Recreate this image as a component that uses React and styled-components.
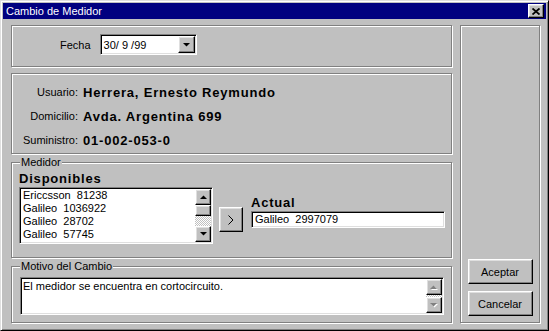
import React from 'react';
import styled, { createGlobalStyle } from 'styled-components';

const GlobalStyle = createGlobalStyle`
  html, body {
    margin: 0;
    padding: 0;
    background: #c0c0c0;
  }
  body {
    font-family: 'Liberation Sans', Arial, sans-serif;
    font-size: 11px;
    color: #000;
  }
  * {
    box-sizing: border-box;
  }
`;

const raised = `
  border: 1px solid;
  border-color: #fff #000 #000 #fff;
  box-shadow: inset -1px -1px #808080, inset 1px 1px #dfdfdf;
  background: #c0c0c0;
`;

const sunken = `
  border: 1px solid;
  border-color: #808080 #fff #fff #808080;
  box-shadow: inset 1px 1px #000, inset -1px -1px #dfdfdf;
  background: #fff;
`;

const Window = styled.div`
  width: 549px;
  height: 331px;
  border: 1px solid;
  border-color: #dfdfdf #000 #000 #dfdfdf;
  box-shadow: inset 1px 1px #fff, inset -1px -1px #808080;
  padding: 2px;
  background: #c0c0c0;
  display: flex;
  flex-direction: column;
`;

const TitleBar = styled.div`
  height: 16px;
  background: #000080;
  color: #fff;
  display: flex;
  align-items: center;
  justify-content: space-between;
  padding: 0 2px 0 3px;
  font-size: 11px;
`;

const CloseButton = styled.div`
  ${raised}
  width: 16px;
  height: 14px;
  display: flex;
  align-items: center;
  justify-content: center;
`;

const Body = styled.div`
  display: grid;
  grid-template-columns: 441px 80px;
  column-gap: 8px;
  padding: 6px 0 0 8px;
`;

const LeftColumn = styled.div`
  display: flex;
  flex-direction: column;
`;

const Frame = styled.div`
  position: relative;
  height: ${(p) => p.$h}px;
  margin-bottom: ${(p) => p.$mb || 0}px;
  border: 1px solid #808080;
  box-shadow: inset 1px 1px #fff, 1px 1px #fff;
`;

const Legend = styled.span`
  position: absolute;
  top: -7px;
  left: 8px;
  padding: 0 1px;
  line-height: 13px;
  background: #c0c0c0;
`;

const FechaFrame = styled(Frame)`
  display: flex;
  align-items: center;
  gap: 9px;
  padding: 0 0 3px 48px;
`;

const Combo = styled.div`
  ${sunken}
  width: 97px;
  height: 21px;
  padding: 1px 1px 1px 3px;
  display: flex;
  align-items: center;
`;

const ComboText = styled.span`
  flex: 1;
  white-space: pre;
`;

const DropButton = styled.div`
  ${raised}
  width: 17px;
  height: 17px;
  display: flex;
  align-items: center;
  justify-content: center;
`;

const InfoFrame = styled(Frame)`
  display: grid;
  grid-template-columns: 66px 1fr;
  grid-auto-rows: 24px;
  column-gap: 5px;
  align-items: center;
  padding-top: 6px;
`;

const InfoLabel = styled.span`
  text-align: right;
`;

const InfoValue = styled.span`
  font-size: 13px;
  font-weight: bold;
  letter-spacing: 0.8px;
`;

const MedidorGroup = styled(Frame)`
  display: flex;
  align-items: flex-start;
  padding: 8px 0 0 7px;
`;

const Column = styled.div`
  display: flex;
  flex-direction: column;
  margin-top: ${(p) => p.$top || 0}px;
`;

const Heading = styled.div`
  font-size: 13px;
  font-weight: bold;
  letter-spacing: 0.8px;
  line-height: 16px;
`;

const ListBox = styled.div`
  ${sunken}
  width: 194px;
  height: 57px;
  padding: 1px;
  display: flex;
`;

const ListItems = styled.div`
  flex: 1;
  padding-left: 2px;
`;

const ListItem = styled.div`
  line-height: 13px;
  white-space: pre;
`;

const ScrollBar = styled.div`
  width: 16px;
  display: flex;
  flex-direction: column;
`;

const ScrollArrow = styled.div`
  ${raised}
  width: 16px;
  height: 16px;
  display: flex;
  align-items: center;
  justify-content: center;
`;

const Thumb = styled.div`
  ${raised}
  width: 16px;
  height: 11px;
`;

const Track = styled.div`
  flex: 1;
  background: repeating-conic-gradient(#c0c0c0 0 25%, #fff 0 50%) 0 0 / 2px 2px;
`;

const MoveButton = styled.div`
  ${raised}
  width: 24px;
  height: 25px;
  margin: 36px 8px 0 6px;
  display: flex;
  align-items: center;
  justify-content: center;
`;

const TextBox = styled.div`
  ${sunken}
  width: 194px;
  height: 17px;
  padding: 1px 1px 1px 3px;
  line-height: 13px;
  white-space: pre;
`;

const MotivoGroup = styled(Frame)`
  padding: 10px 0 0 8px;
`;

const TextArea = styled.div`
  ${sunken}
  width: 424px;
  height: 38px;
  padding: 1px;
  display: flex;
`;

const TextAreaContent = styled.div`
  flex: 1;
  padding: 1px 0 0 1px;
  line-height: 13px;
`;

const ActionPanel = styled(Frame)`
  display: flex;
  flex-direction: column;
  justify-content: flex-end;
  align-items: center;
  gap: 7px;
  padding-bottom: 6px;
`;

const PushButton = styled.button`
  ${raised}
  width: 65px;
  height: 25px;
  padding: 0;
  font-family: 'Liberation Sans', Arial, sans-serif;
  font-size: 11px;
  color: #000;
`;

const Triangle = ({ dir = 'down', disabled }) => {
  const points = dir === 'up' ? '0,4 3.5,0.5 7,4' : '0,0 7,0 3.5,3.5';
  if (disabled) {
    return (
      <svg width='8' height='5' viewBox='0 0 8 5'>
        <polygon points={points} fill='#fff' transform='translate(1,1)' />
        <polygon points={points} fill='#808080' />
      </svg>
    );
  }
  return (
    <svg width='7' height='4' viewBox='0 0 7 4'>
      <polygon points={points} fill='#000' />
    </svg>
  );
};

const CloseGlyph = () => (
  <svg width='8' height='7' viewBox='0 0 8 7'>
    <path d='M0.5 0.5 L7.5 6.5 M7.5 0.5 L0.5 6.5' stroke='#000' strokeWidth='1.8' />
  </svg>
);

const Chevron = () => (
  <svg width='6' height='10' viewBox='0 0 6 10'>
    <polyline points='0.5,0.5 5,5 0.5,9.5' fill='none' stroke='#000' strokeWidth='1' />
  </svg>
);

const disponibles = [
  'Ericcsson  81238',
  'Galileo  1036922',
  'Galileo  28702',
  'Galileo  57745',
];

const App = () => (
  <>
    <GlobalStyle />
    <Window>
      <TitleBar>
        <span>Cambio de Medidor</span>
        <CloseButton>
          <CloseGlyph />
        </CloseButton>
      </TitleBar>
      <Body>
        <LeftColumn>
          <FechaFrame $h={42} $mb={6}>
            <span>Fecha</span>
            <Combo>
              <ComboText>30/ 9 /99</ComboText>
              <DropButton>
                <Triangle dir='down' />
              </DropButton>
            </Combo>
          </FechaFrame>

          <InfoFrame $h={81} $mb={8}>
            <InfoLabel>Usuario:</InfoLabel>
            <InfoValue>Herrera, Ernesto Reymundo</InfoValue>
            <InfoLabel>Domicilio:</InfoLabel>
            <InfoValue>Avda. Argentina 699</InfoValue>
            <InfoLabel>Suministro:</InfoLabel>
            <InfoValue>01-002-053-0</InfoValue>
          </InfoFrame>

          <MedidorGroup $h={96} $mb={8}>
            <Legend>Medidor</Legend>
            <Column>
              <Heading>Disponibles</Heading>
              <ListBox>
                <ListItems>
                  {disponibles.map((item) => (
                    <ListItem key={item}>{item}</ListItem>
                  ))}
                </ListItems>
                <ScrollBar>
                  <ScrollArrow>
                    <Triangle dir='up' />
                  </ScrollArrow>
                  <Thumb />
                  <Track />
                  <ScrollArrow>
                    <Triangle dir='down' />
                  </ScrollArrow>
                </ScrollBar>
              </ListBox>
            </Column>
            <MoveButton>
              <Chevron />
            </MoveButton>
            <Column $top={24}>
              <Heading>Actual</Heading>
              <TextBox>Galileo  2997079</TextBox>
            </Column>
          </MedidorGroup>

          <MotivoGroup $h={57}>
            <Legend>Motivo del Cambio</Legend>
            <TextArea>
              <TextAreaContent>El medidor se encuentra en cortocircuito.</TextAreaContent>
              <ScrollBar>
                <ScrollArrow>
                  <Triangle dir='up' disabled />
                </ScrollArrow>
                <Track />
                <ScrollArrow>
                  <Triangle dir='down' disabled />
                </ScrollArrow>
              </ScrollBar>
            </TextArea>
          </MotivoGroup>
        </LeftColumn>

        <ActionPanel $h={298}>
          <PushButton>Aceptar</PushButton>
          <PushButton>Cancelar</PushButton>
        </ActionPanel>
      </Body>
    </Window>
  </>
);

export default App;
